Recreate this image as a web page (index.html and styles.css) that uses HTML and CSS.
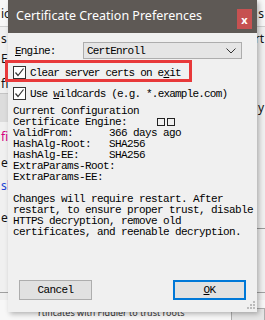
FILE: index.html
```html
<!DOCTYPE html>
<html>
<head>
    <title>Certificate Creation Preferences</title>
    <link rel="stylesheet" href="styles.css">
</head>
<body>
    <div class="screen">
        <!-- Window behind the dialog -->
        <div class="backdrop">
            <div class="bg-row tabs"><span>io</span><span>s</span></div>
            <div class="bg-row r2"><span>s</span><span>rt</span></div>
            <div class="bg-row r3"><span>E</span><span></span></div>
            <div class="bg-row r4"><span>ff</span><span></span></div>
            <div class="bg-row r5"><span class="bg-btn"></span><span>y</span></div>
            <div class="bg-row r6"><span class="pink">fi</span><span></span></div>
            <div class="bg-row r7"><span>e</span><span></span></div>
            <div class="bg-row r8"><span class="link">sl</span><span></span></div>
            <div class="bg-row r9"><span>e</span><span class="ruled"></span></div>
            <div class="bg-row r10"></div>
            <div class="bg-row footer"><span class="hint">rtificates with Fiddler to trust roots</span><span class="bg-box"></span></div>
        </div>

        <!-- Dialog -->
        <div class="dialog">
            <div class="titlebar">
                <span class="title">Certificate Creation Preferences</span>
                <span class="close">x</span>
            </div>
            <div class="content">
                <div class="engine-row">
                    <label><u>E</u>ngine:</label>
                    <div class="combo">
                        <span>CertEnroll</span>
                        <svg width="10" height="6" viewBox="0 0 10 6"><path d="M0.5 0.5 L5 5 L9.5 0.5" fill="none" stroke="#333" stroke-width="1"/></svg>
                    </div>
                </div>
                <div class="check-row first">
                    <span class="box"><svg width="11" height="11" viewBox="0 0 11 11"><path d="M1.5 5.5 L4 8.5 L9.5 1.5" fill="none" stroke="#333" stroke-width="1.2"/></svg></span>
                    <span class="label">Clear server certs on e<u>x</u>it</span>
                </div>
                <div class="check-row">
                    <span class="box"><svg width="11" height="11" viewBox="0 0 11 11"><path d="M1.5 5.5 L4 8.5 L9.5 1.5" fill="none" stroke="#333" stroke-width="1.2"/></svg></span>
                    <span class="label">Use <u>w</u>ildcards (e.g. *.example.com)</span>
                </div>
<pre class="config">Current Configuration
Certificate Engine:     <span class="tofu"></span><span class="tofu"></span>
ValidFrom:      366 days ago
HashAlg-Root:   SHA256
HashAlg-EE:     SHA256
ExtraParams-Root:
ExtraParams-EE:

Changes will require restart. After
restart, to ensure proper trust, disable
HTTPS decryption, remove old
certificates, and reenable decryption.</pre>
                <div class="buttons">
                    <button>Cancel</button>
                    <button class="default"><u>O</u>K</button>
                </div>
            </div>
            <svg class="grip" width="8" height="8" viewBox="0 0 8 8">
                <rect x="6" y="0" width="2" height="2" fill="#bcbcbc"/>
                <rect x="3" y="3" width="2" height="2" fill="#bcbcbc"/>
                <rect x="6" y="3" width="2" height="2" fill="#bcbcbc"/>
                <rect x="0" y="6" width="2" height="2" fill="#bcbcbc"/>
                <rect x="3" y="6" width="2" height="2" fill="#bcbcbc"/>
                <rect x="6" y="6" width="2" height="2" fill="#bcbcbc"/>
            </svg>
        </div>

        <!-- Annotation box -->
        <div class="highlight"></div>
    </div>
</body>
</html>
```

FILE: styles.css
```css
body {
    margin: 0;
    background-color: #f0f0f0;
}
.screen {
    position: relative;
    width: 265px;
    height: 320px;
    overflow: hidden;
    font-family: "Noto Sans", "Open Sans", sans-serif;
}

/* background window */
.backdrop {
    display: flex;
    flex-direction: column;
    font-size: 12px;
    color: #111;
}
.bg-row {
    display: flex;
    justify-content: space-between;
    align-items: center;
}
.bg-row span {
    padding: 0 1px;
}
.tabs {
    height: 27px;
    background-color: #f7f7f7;
    border-bottom: 1px solid #cfcfcf;
    align-items: flex-end;
    padding-bottom: 4px;
    box-sizing: border-box;
}
.r2 { height: 22px; }
.r3 { height: 18px; }
.r4 { height: 25px; align-items: flex-end; }
.r5 { height: 30px; }
.r6 { height: 28px; }
.r7 { height: 24px; }
.r8 { height: 22px; }
.r9 { height: 30px; align-items: flex-end; }
.r10 {
    height: 67px;
    border-bottom: 1px solid #a0a0a0;
    box-sizing: border-box;
}
.bg-btn {
    display: block;
    width: 10px;
    height: 28px;
    background-color: #dcdcdc;
    border-top: 1px solid #c4c4c4;
}
.pink {
    color: #d5007f;
}
.link {
    color: #1a3fd6;
    border-right: 1px solid #5d7be0;
}
.ruled {
    display: block;
    width: 10px;
    border-bottom: 1px solid #9a9a9a;
    margin-bottom: -3px;
}
.footer {
    height: 26px;
    margin-top: 7px;
    background-color: #f7f7f7;
    align-items: flex-start;
    padding-top: 8px;
}
.hint {
    padding-left: 38px !important;
    font-size: 9px;
    line-height: 10px;
    color: #333;
}
.bg-box {
    display: block;
    width: 30px;
    height: 12px;
    border: 1px solid #adadad;
    background-color: #e5e5e5;
}

/* dialog */
.dialog {
    position: absolute;
    left: 8px;
    top: 0;
    width: 249px;
    height: 312px;
    background-color: #f0f0f0;
    box-shadow: 2px 2px 5px rgba(0, 0, 0, 0.28);
    display: flex;
    flex-direction: column;
}
.titlebar {
    height: 33px;
    background-color: #5e5955;
    display: flex;
    align-items: center;
    justify-content: space-between;
    padding: 0 5px 0 8px;
    flex-shrink: 0;
}
.title {
    color: #fff;
    font-size: 12.5px;
    margin-top: -3px;
}
.close {
    width: 15px;
    height: 20px;
    margin-top: 5px;
    background-color: #c65151;
    color: #fff;
    font-size: 11px;
    font-weight: bold;
    display: flex;
    align-items: center;
    justify-content: center;
}
.content {
    flex: 1;
    display: flex;
    flex-direction: column;
    padding: 9px 5px 12px 5px;
    font-family: "Liberation Mono", "DejaVu Sans Mono", monospace;
    font-size: 11px;
    color: #000;
}
.engine-row {
    display: flex;
    align-items: center;
    height: 17px;
    letter-spacing: -0.8px;
}
.engine-row label {
    width: 68px;
    padding-left: 2px;
}
.combo {
    width: 159px;
    height: 17px;
    box-sizing: border-box;
    border: 1px solid #adadad;
    background-color: #e5e5e5;
    display: flex;
    align-items: center;
    justify-content: space-between;
    padding: 0 5px 0 3px;
}
.check-row {
    display: flex;
    align-items: center;
    height: 13px;
    margin-top: 8px;
    letter-spacing: -0.8px;
}
.check-row.first {
    margin-top: 7px;
}
.box {
    width: 13px;
    height: 13px;
    box-sizing: border-box;
    border: 1px solid #333;
    background-color: #fff;
    display: flex;
    align-items: center;
    justify-content: center;
    margin-right: 4px;
}
.config {
    margin: 6px 0 0 0;
    font-family: inherit;
    font-size: 11px;
    line-height: 11px;
    letter-spacing: -0.6px;
}
.tofu {
    display: inline-block;
    width: 8px;
    height: 8px;
    box-sizing: border-box;
    border: 1px solid #222;
    margin-right: 2px;
    vertical-align: -1px;
}
.buttons {
    margin-top: auto;
    display: flex;
    justify-content: space-between;
    padding: 0 6px;
}
button {
    width: 73px;
    height: 20px;
    border: 1px solid #adadad;
    background-color: #e1e1e1;
    font-family: "Liberation Mono", "DejaVu Sans Mono", monospace;
    font-size: 11px;
    letter-spacing: -0.6px;
    color: #000;
    padding: 0;
}
button.default {
    border: 2px solid #0078d7;
}
.grip {
    position: absolute;
    right: 2px;
    bottom: 3px;
}

/* red annotation */
.highlight {
    position: absolute;
    left: 5px;
    top: 60px;
    width: 187px;
    height: 22px;
    box-sizing: border-box;
    border: 3px solid #e8393a;
}
```
